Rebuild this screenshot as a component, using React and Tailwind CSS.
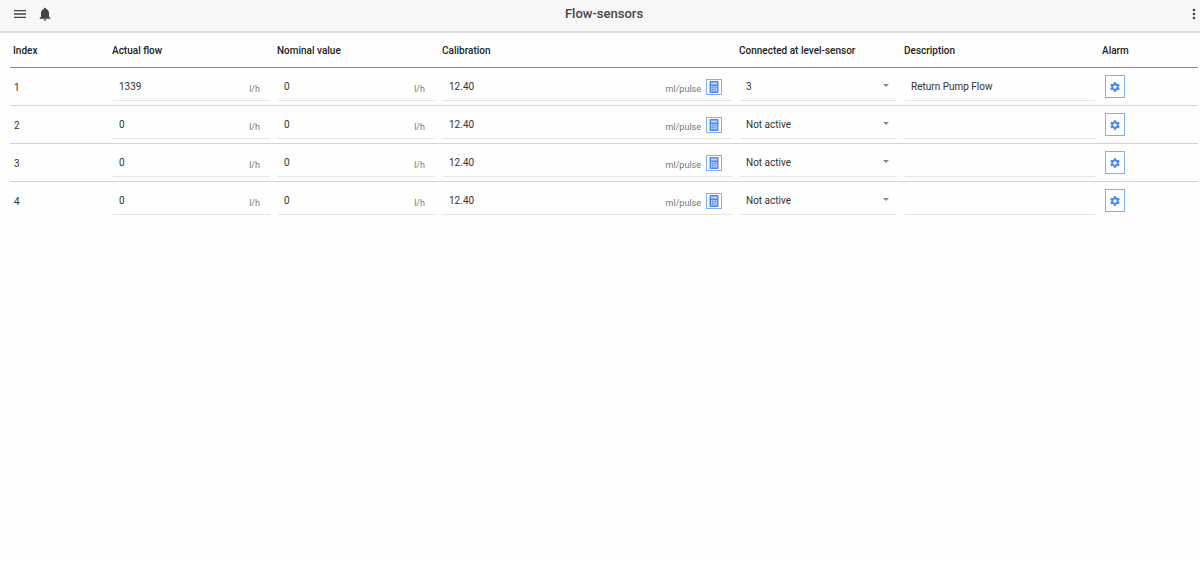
import { useState } from 'react';
import { MdMenu, MdMoreVert, MdNotifications, MdSettings } from 'react-icons/md';

const initialSensors = [
  { index: 1, actualFlow: '1339', nominal: '0', calibration: '12.40', level: '3', description: 'Return Pump Flow' },
  { index: 2, actualFlow: '0', nominal: '0', calibration: '12.40', level: '', description: '' },
  { index: 3, actualFlow: '0', nominal: '0', calibration: '12.40', level: '', description: '' },
  { index: 4, actualFlow: '0', nominal: '0', calibration: '12.40', level: '', description: '' },
];

const levelSensors = ['1', '2', '3', '4'];

function CalculatorIcon() {
  return (
    <svg viewBox="0 0 20 24" className="h-3 w-[10px]" aria-hidden="true">
      <rect x="1" y="0" width="18" height="24" rx="2" fill="#4a88f8" />
      <rect x="4" y="3" width="12" height="4" fill="#c6dafc" />
      <g fill="#c6dafc">
        <rect x="4" y="10" width="3" height="3" />
        <rect x="8.5" y="10" width="3" height="3" />
        <rect x="13" y="10" width="3" height="3" />
        <rect x="4" y="14" width="3" height="3" />
        <rect x="8.5" y="14" width="3" height="3" />
        <rect x="13" y="14" width="3" height="7" />
        <rect x="4" y="18" width="3" height="3" />
        <rect x="8.5" y="18" width="3" height="3" />
      </g>
    </svg>
  );
}

function Field({ label, name, value, onChange, unit, children }) {
  return (
    <div className="mx-1 mb-1 flex h-[33px] items-start border-b border-[#e4e4e4]">
      <input
        type="text"
        name={name}
        aria-label={label}
        value={value}
        onChange={onChange}
        className="h-9 min-w-0 flex-1 bg-transparent pl-[6px] text-[10px] text-[#333] outline-none"
      />
      {unit && <span className="pt-[13px] pr-[10px] text-[9px] leading-4 text-[#777]">{unit}</span>}
      {children}
    </div>
  );
}

export default function App() {
  const [sensors, setSensors] = useState(initialSensors);

  const handleChange = (index) => (e) => {
    const { name, value } = e.target;
    setSensors(sensors.map((s) => (s.index === index ? { ...s, [name]: value } : s)));
  };

  return (
    <div className="min-h-screen bg-[#fefefe] font-['Roboto',sans-serif] text-[#444]">
      <header className="flex h-[33px] items-center border-b-2 border-[#e0e0e0] bg-[#f7f7f7] pb-[3px]">
        <div className="flex flex-1 items-center gap-[9px] pl-2">
          <button type="button" aria-label="Menu" className="ml-1">
            <MdMenu className="size-4" />
          </button>
          <button type="button" aria-label="Notifications">
            <MdNotifications className="size-4" />
          </button>
        </div>
        <h1 className="text-[13px] font-medium">Flow-sensors</h1>
        <div className="flex flex-1 justify-end">
          <button type="button" aria-label="More" className="flex w-3 justify-center overflow-hidden">
            <MdMoreVert className="size-4 shrink-0" />
          </button>
        </div>
      </header>

      <main className="pr-[2px] pl-[10px]">
        <table className="w-full table-fixed border-separate border-spacing-0 text-left">
          <colgroup>
            <col className="w-3/36" />
            <col className="w-5/36" />
            <col className="w-5/36" />
            <col className="w-9/36" />
            <col className="w-5/36" />
            <col className="w-6/36" />
            <col className="w-3/36" />
          </colgroup>
          <thead>
            <tr className="text-[10px] text-[#222] *:h-[35px] *:border-b *:border-[#8a8a8a] *:px-[3px] *:font-medium">
              <th>Index</th>
              <th>Actual flow</th>
              <th>Nominal value</th>
              <th>Calibration</th>
              <th>Connected at level-sensor</th>
              <th>Description</th>
              <th>Alarm</th>
            </tr>
          </thead>
          <tbody>
            {sensors.map((s) => (
              <tr key={s.index} className="*:border-b *:border-[#d4d4d4] last:*:border-transparent">
                <td className="pt-[2px] pl-1 text-[10px] text-[#333]">{s.index}</td>
                <td>
                  <Field label="Actual flow" name="actualFlow" unit="l/h" value={s.actualFlow} onChange={handleChange(s.index)} />
                </td>
                <td>
                  <Field label="Nominal value" name="nominal" unit="l/h" value={s.nominal} onChange={handleChange(s.index)} />
                </td>
                <td>
                  <Field label="Calibration" name="calibration" value={s.calibration} onChange={handleChange(s.index)}>
                    <span className="pt-[13px] pr-[5px] text-[9px] leading-4 text-[#777]">ml/pulse</span>
                    <button
                      type="button"
                      aria-label="Calculate calibration"
                      className="mt-[11px] mr-[10px] flex size-4 items-center justify-center border border-[#82aef8]"
                    >
                      <CalculatorIcon />
                    </button>
                  </Field>
                </td>
                <td>
                  <div className="relative mx-1 mb-1 h-[33px] border-b border-[#e4e4e4]">
                    <select
                      name="level"
                      aria-label="Connected at level-sensor"
                      value={s.level}
                      onChange={handleChange(s.index)}
                      className="h-9 w-full appearance-none bg-transparent pl-[6px] text-[10px] text-[#333] outline-none"
                    >
                      <option value="">Not active</option>
                      {levelSensors.map((level) => (
                        <option key={level} value={level}>{level}</option>
                      ))}
                    </select>
                    <svg viewBox="0 0 6 3" className="pointer-events-none absolute top-4 right-2 h-[3px] w-[6px]" aria-hidden="true">
                      <path d="M0 0h6L3 3z" fill="#888" />
                    </svg>
                  </div>
                </td>
                <td>
                  <Field label="Description" name="description" value={s.description} onChange={handleChange(s.index)} />
                </td>
                <td className="pl-[6px]">
                  <button
                    type="button"
                    aria-label="Alarm settings"
                    className="flex h-[23px] w-5 items-center justify-center border border-[#82aef8] text-[#4285f4]"
                  >
                    <MdSettings className="size-3 shrink-0" />
                  </button>
                </td>
              </tr>
            ))}
          </tbody>
        </table>
      </main>
    </div>
  );
}
